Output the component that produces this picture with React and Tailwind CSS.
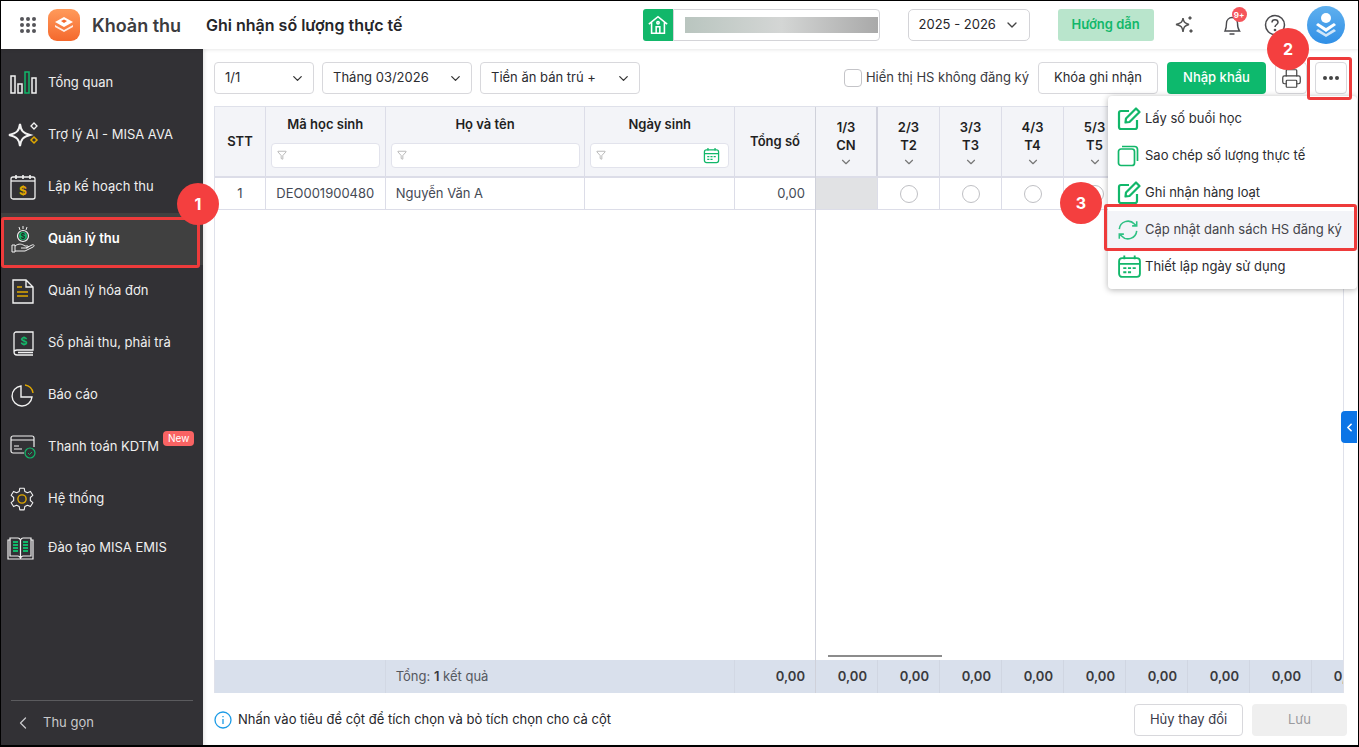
import React from 'react'
import { ChevronDown, ChevronLeft, Filter, Printer } from 'lucide-react'

const W = '#f2f2f2'
const Y = '#e0a800'
const G = '#12b76a'

const IconChart = () => (
  <svg width="28" height="24" viewBox="0 0 28 24" fill="none" strokeWidth="1.5">
    <rect x="1" y="5" width="4" height="17" stroke={W} />
    <rect x="8" y="13" width="4" height="9" stroke={W} />
    <rect x="15" y="1" width="4" height="21" stroke={G} />
    <rect x="22" y="7" width="4" height="15" stroke={W} />
  </svg>
)

const IconAi = () => (
  <svg width="32" height="26" viewBox="0 0 32 26" fill="none">
    <path d="M12 2 C13 9 15 11 22 13 C15 15 13 17 12 24 C11 17 9 15 1 13 C9 11 11 9 12 2 Z" stroke={W} strokeWidth="2" />
    <path d="M26 1 l3 3 -3 3 -3 -3 Z" stroke={W} strokeWidth="1.3" />
    <path d="M26 15 l3 3 -3 3 -3 -3 Z" stroke={Y} strokeWidth="1.5" />
  </svg>
)

const IconPlan = () => (
  <svg width="26" height="26" viewBox="0 0 26 26" fill="none">
    <rect x="1" y="3" width="24" height="22" rx="2" stroke={W} strokeWidth="1.3" />
    <path d="M1 7 H25" stroke={W} strokeWidth="1.3" />
    <path d="M6 1 V5 M13 1 V5 M20 1 V5" stroke={W} strokeWidth="1.6" />
    <text x="13" y="21" textAnchor="middle" fontSize="12" fontWeight="700" fill={Y} fontFamily="Inter">$</text>
  </svg>
)

const IconHand = () => (
  <svg width="24" height="27" viewBox="0 0 24 27" fill="none">
    <path d="M12 0 V3 M8 1 L9 4 M16 1 L15 4" stroke={W} strokeWidth="1" />
    <circle cx="12" cy="10" r="5.5" stroke={W} strokeWidth="1.2" />
    <circle cx="12" cy="10" r="4" fill={G} />
    <text x="12" y="13" textAnchor="middle" fontSize="7" fontWeight="700" fill="#222" fontFamily="Inter">$</text>
    <path d="M1 19 H4 V26 H1 Z M4 20 C8 17 11 18 14 20 H17 C18 21 17 22 15 22 H10 M15 22 L21 19 C23 18 24 20 22 21 L14 25 H4" stroke={W} strokeWidth="1" />
  </svg>
)

const IconInvoice = () => (
  <svg width="22" height="25" viewBox="0 0 22 25" fill="none">
    <path d="M1 1 H14 L21 8 V24 H1 Z M14 1 V8 H21" stroke={W} strokeWidth="1.4" />
    <path d="M5 8 H10 M5 13 H16 M5 17 H16" stroke={Y} strokeWidth="1.6" />
  </svg>
)

const IconBook = () => (
  <svg width="21" height="25" viewBox="0 0 21 25" fill="none">
    <path d="M3 1 H20 V19 H4 C2 19 1 20 1 21 V3 C1 2 2 1 3 1 Z" stroke={W} strokeWidth="1.3" />
    <path d="M1 21 C1 23 2 24 4 24 H20 M5 21.5 H20" stroke={W} strokeWidth="1.3" />
    <text x="11" y="14" textAnchor="middle" fontSize="11" fontWeight="700" fill={G} fontFamily="Inter">$</text>
  </svg>
)

const IconPie = () => (
  <svg width="23" height="23" viewBox="0 0 23 23" fill="none">
    <path d="M10 2 A10 10 0 1 0 21 13 H10 Z" stroke={W} strokeWidth="1.4" />
    <path d="M14 1 A9 9 0 0 1 22 9" stroke={Y} strokeWidth="1.4" />
  </svg>
)

const IconPay = () => (
  <svg width="26" height="24" viewBox="0 0 26 24" fill="none">
    <path d="M14 18 H3 C2 18 1 17 1 16 V3 C1 2 2 1 3 1 H22 C23 1 24 2 24 3 V12" stroke={W} strokeWidth="1.2" />
    <path d="M1 5 H24 M4 11 H9 M4 14 H12" stroke={W} strokeWidth="1.2" />
    <circle cx="20" cy="18" r="5" stroke={G} strokeWidth="1.2" />
    <path d="M18 18 L19.5 19.5 L22 17" stroke={G} strokeWidth="1" />
  </svg>
)

const IconGear = () => (
  <svg width="26" height="26" viewBox="0 0 24 24" fill="none">
    <path d="M10 2 H14 L14.6 5 L17 6.2 L19.8 5 L22 8.6 L19.7 10.6 V13.4 L22 15.4 L19.8 19 L17 17.8 L14.6 19 L14 22 H10 L9.4 19 L7 17.8 L4.2 19 L2 15.4 L4.3 13.4 V10.6 L2 8.6 L4.2 5 L7 6.2 L9.4 5 Z" stroke={W} strokeWidth="1" strokeLinejoin="round" />
    <circle cx="12" cy="12" r="3.8" stroke={Y} strokeWidth="1.3" />
  </svg>
)

const IconTrain = () => (
  <svg width="27" height="23" viewBox="0 0 27 23" fill="none">
    <path d="M1 3 H3 V19 H11 C12 19 13 20 13.5 21 C14 20 15 19 16 19 H24 V3 H26 V22 H1 Z" stroke={W} strokeWidth="1.2" />
    <path d="M3 3 V1 H11 C12 1 13 2 13.5 3 C14 2 15 1 16 1 H24 V3 M13.5 3 V21" stroke={W} strokeWidth="1.2" />
    <path d="M6 5 H11 M6 8 H11 M6 11 H11 M6 14 H11 M16 5 H21 M16 8 H21 M16 11 H21 M16 14 H21" stroke={G} strokeWidth="2" />
  </svg>
)

const navItems = [
  { label: 'Tổng quan', icon: IconChart, pl: 'pl-[9px]' },
  { label: 'Trợ lý AI - MISA AVA', icon: IconAi, pl: 'pl-[7px]' },
  { label: 'Lập kế hoạch thu', icon: IconPlan, pl: 'pl-[9px]' },
  { label: 'Quản lý thu', icon: IconHand, pl: 'pl-[10px]', active: true },
  { label: 'Quản lý hóa đơn', icon: IconInvoice, pl: 'pl-[11px]' },
  { label: 'Sổ phải thu, phải trả', icon: IconBook, pl: 'pl-[12px]' },
  { label: 'Báo cáo', icon: IconPie, pl: 'pl-[10px]' },
  { label: 'Thanh toán KDTM', icon: IconPay, pl: 'pl-[9px]', badge: true },
  { label: 'Hệ thống', icon: IconGear, pl: 'pl-[8px]' },
  { label: 'Đào tạo MISA EMIS', icon: IconTrain, pl: 'pl-[6px]', tight: true },
]

function Sidebar() {
  return (
    <aside className="flex w-[202px] shrink-0 flex-col bg-[#323135] pt-[8px]">
      {navItems.map((item) => {
        const Icon = item.icon
        return (
          <div
            key={item.label}
            className={`relative flex items-center text-[13px] ${item.tight ? 'h-[46px]' : 'h-[52px]'} ${item.pl} ${
              item.active ? 'bg-[#404040] font-semibold text-white' : 'text-[#efefef]'
            }`}
          >
            <span className="flex w-[38px] shrink-0">
              <Icon />
            </span>
            <span className="absolute left-[47px]">{item.label}</span>
            {item.badge && (
              <span className="absolute left-[162px] top-[10px] rounded-[4px] bg-[#f96363] px-[5px] text-[10px] leading-[15px] text-white">
                New
              </span>
            )}
          </div>
        )
      })}
      <div className="mt-auto px-[10px]">
        <div className="flex h-[45px] items-center gap-[10px] border-t border-[#5b5b5e] pb-[-1px] pl-[2px] text-[13px] text-[#c9c9cb]">
          <ChevronLeft size={20} strokeWidth={1.5} />
          <span>Thu gọn</span>
        </div>
      </div>
    </aside>
  )
}

function Header() {
  return (
    <header className="relative z-10 flex h-[48px] shrink-0 items-center bg-white shadow-[0_1px_4px_rgba(0,0,0,0.08)]">
      <div className="ml-[19px] grid grid-cols-3 gap-[2px]">
        {Array.from({ length: 9 }).map((_, i) => (
          <span key={i} className="h-[4px] w-[4px] rounded-full bg-[#55555a]" />
        ))}
      </div>
      <div className="ml-[12px] grid h-[32px] w-[32px] place-items-center rounded-[9px] bg-gradient-to-b from-[#ff9a5a] to-[#f4682c]">
        <svg width="20" height="18" viewBox="0 0 20 18">
          <path d="M10 1 L19 6 L10 11 L1 6 Z" fill="#fff" />
          <path d="M1 9 L10 14 L19 9 V11 L10 16 L1 11 Z" fill="#fff" opacity="0.85" />
          <path d="M7 5 L10 3.5 L13 5 L10 7 Z" fill="#f4682c" />
        </svg>
      </div>
      <span className="ml-[12px] w-[114px] text-[18px] font-semibold text-[#3c3c40]">Khoản thu</span>
      <span className="text-[16px] font-semibold text-[#26262a]">Ghi nhận số lượng thực tế</span>

      <div className="ml-[240px] flex h-[32px] w-[237px]">
        <div className="grid w-[30px] place-items-center rounded-l-[3px] bg-[#12b76a]">
          <svg width="22" height="22" viewBox="0 0 24 24" fill="none" stroke="#fff" strokeWidth="1.7">
            <path d="M2 11 L12 3 L22 11 M5 9 V21 H19 V9" />
            <path d="M10 21 V14 H14 V21" />
            <circle cx="12" cy="9.5" r="1.3" />
          </svg>
        </div>
        <div className="flex flex-1 items-center rounded-r-[4px] border border-[#d4d4d8] pl-[11px]">
          <div className="h-[16px] w-[193px] bg-gradient-to-r from-[#b9c5bf] via-[#d4d6d5] to-[#a9a9a9]" />
        </div>
      </div>

      <div className="ml-[28px] flex h-[32px] w-[122px] items-center justify-between rounded-[5px] border border-[#d4d4d8] pl-[10px] pr-[9px] text-[13px] text-[#26262a]">
        <span>2025 - 2026</span>
        <ChevronDown size={16} className="text-[#444]" />
      </div>

      <div className="ml-[28px] grid h-[32px] w-[96px] place-items-center rounded-[3px] bg-[#b9e5cc] text-[13px] font-semibold text-[#12b76a]">
        Hướng dẫn
      </div>

      <svg className="ml-[21px]" width="20" height="20" viewBox="0 0 20 20" fill="#555">
        <path d="M8 3 C8.6 7 9.6 8.4 14 9.5 C9.6 10.6 8.6 12 8 17 C7.4 12 6.4 10.6 1 9.5 C6.4 8.4 7.4 7 8 3 Z" fill="none" stroke="#555" strokeWidth="1.5" />
        <path d="M15 1 l2 2 -2 2 -2 -2 Z M16 14 l2 2 -2 2 -2 -2 Z" />
      </svg>

      <div className="relative ml-[25px] h-[24px] w-[24px]">
        <svg width="24" height="24" viewBox="0 0 24 24" fill="none" stroke="#4a4a4e" strokeWidth="1.4">
          <path d="M5 18 C6 16 6.5 14 6.5 10 C6.5 7 9 4.5 12 4.5 C15 4.5 17.5 7 17.5 10 C17.5 14 18 16 19.5 18 Z" />
          <path d="M10 21 H14" strokeLinecap="round" />
        </svg>
        <span className="absolute left-[12px] top-[-6px] grid h-[15px] w-[15px] place-items-center rounded-full bg-[#f5545a] text-[8px] font-bold text-white">
          9+
        </span>
      </div>

      <svg className="ml-[19px]" width="24" height="24" viewBox="0 0 24 24" fill="none" stroke="#4a4a4e" strokeWidth="1.5">
        <circle cx="12" cy="12" r="9.5" />
        <path d="M9 9.5 C9 7.5 10.5 6.8 12 6.8 C13.8 6.8 15 8 15 9.4 C15 11.5 12 11.5 12 14" />
        <circle cx="12" cy="17" r="0.6" />
      </svg>

      <div className="ml-[20px] grid h-[38px] w-[38px] place-items-center rounded-full bg-gradient-to-b from-[#5fb0ee] to-[#2f8fe6]">
        <svg width="24" height="26" viewBox="0 0 24 26" fill="#fff">
          <circle cx="12" cy="6" r="5" />
          <path d="M4 11 L12 16 L20 11 L22 13 L12 20 L2 13 Z" />
          <path d="M4 17 L12 22 L20 17 L22 19 L12 25 L2 19 Z" opacity="0.75" />
        </svg>
      </div>
    </header>
  )
}

function Select({ label, width }) {
  return (
    <div className={`flex h-[32px] items-center justify-between rounded-[4px] border border-[#d8d8dc] pl-[10px] pr-[8px] text-[13px] text-[#2c2c30] ${width}`}>
      <span>{label}</span>
      <ChevronDown size={15} className="text-[#333]" />
    </div>
  )
}

function Toolbar() {
  return (
    <div className="flex h-[32px] items-center">
      <Select label="1/1" width="w-[100px]" />
      <div className="w-[8px]" />
      <Select label="Tháng 03/2026" width="w-[150px]" />
      <div className="w-[8px]" />
      <Select label="Tiền ăn bán trú +" width="w-[160px]" />
      <div className="ml-auto flex items-center">
        <span className="h-[18px] w-[18px] rounded-[4px] border border-[#c4c4c8] bg-white" />
        <span className="ml-[4px] text-[13px] text-[#3a3a3e]">Hiển thị HS không đăng ký</span>
        <button className="ml-[9px] h-[32px] w-[120px] rounded-[4px] border border-[#d8d8dc] text-[13px] text-[#2c2c30]">Khóa ghi nhận</button>
        <button className="ml-[9px] h-[32px] w-[99px] rounded-[4px] bg-[#0db96d] text-[13px] font-medium text-white">Nhập khẩu</button>
        <button className="ml-[9px] grid h-[32px] w-[32px] place-items-center rounded-[4px] border border-[#d8d8dc] text-[#444]">
          <Printer size={21} strokeWidth={1.4} />
        </button>
        <button className="ml-[8px] flex h-[32px] w-[32px] items-center justify-center gap-[2px] rounded-[4px] border border-[#d8d8dc]">
          <span className="h-[4px] w-[4px] rounded-full bg-[#444]" />
          <span className="h-[4px] w-[4px] rounded-full bg-[#444]" />
          <span className="h-[4px] w-[4px] rounded-full bg-[#444]" />
        </button>
      </div>
    </div>
  )
}

function FilterBox({ width, calendar }) {
  return (
    <div className={`mt-[8px] flex h-[25px] items-center justify-between rounded-[4px] border border-[#e2e3ec] bg-white pl-[5px] pr-[8px] ${width}`}>
      <Filter size={10} strokeWidth={1.2} className="text-[#777]" />
      {calendar && <CalendarIcon size={17} />}
    </div>
  )
}

function CalendarIcon({ size }) {
  return (
    <svg width={size} height={size} viewBox="0 0 24 24" fill="none" stroke="#12b76a" strokeWidth="1.8">
      <rect x="2" y="4" width="20" height="18" rx="3" />
      <path d="M2 9.5 H22 M7 1.5 V5 M17 1.5 V5" />
      <path d="M6 13.5 H9 M10.5 13.5 H13.5 M15 13.5 H18 M6 17.5 H9 M10.5 17.5 H13.5" />
    </svg>
  )
}

const fixedCols = [
  { key: 'stt', width: 'w-[51px]', title: 'STT' },
  { key: 'code', width: 'w-[120px]', title: 'Mã học sinh', filter: 'w-[109px]' },
  { key: 'name', width: 'w-[200px]', title: 'Họ và tên', filter: 'w-[189px]' },
  { key: 'dob', width: 'w-[150px]', title: 'Ngày sinh', filter: 'w-[139px]', calendar: true },
  { key: 'total', width: 'w-[80px]', title: 'Tổng số' },
]

const dayCols = [
  ['1/3', 'CN'],
  ['2/3', 'T2'],
  ['3/3', 'T3'],
  ['4/3', 'T4'],
  ['5/3', 'T5'],
  ['6/3', 'T6'],
  ['7/3', 'T7'],
  ['8/3', 'CN'],
  ['9/3', 'T2'],
]

function Table() {
  return (
    <div className="mt-[12px] flex h-[587px] w-[1130px] overflow-hidden border-x border-t border-[#dfe1ea]">
      {/* cột cố định */}
      <div className="flex w-[601px] shrink-0 flex-col border-r border-[#cfd1da]">
        <div className="flex h-[71px] border-b-2 border-[#dcdde8] bg-[#f3f4f8] text-[13px] font-semibold text-[#1f1f23]">
          {fixedCols.map((col) => (
            <div
              key={col.key}
              className={`flex flex-col items-center justify-center border-r border-[#dcdde8] last:border-r-0 ${col.width}`}
            >
              <span>{col.title}</span>
              {col.filter && <FilterBox width={col.filter} calendar={col.calendar} />}
            </div>
          ))}
        </div>
        <div className="flex h-[32px] border-b border-[#dcdde8] text-[13px] text-[#444a55]">
          <div className="grid w-[51px] place-items-center border-r border-[#dcdde8]">1</div>
          <div className="grid w-[120px] place-items-center border-r border-[#dcdde8]">DEO001900480</div>
          <div className="flex w-[200px] items-center border-r border-[#dcdde8] pl-[10px]">Nguyễn Văn A</div>
          <div className="w-[150px] border-r border-[#dcdde8]" />
          <div className="flex w-[80px] items-center justify-end pr-[10px]">0,00</div>
        </div>
        <div className="flex-1" />
        <div className="flex h-[33px] bg-[#d9e0ec] text-[13px] text-[#55585f]">
          <div className="w-[171px] border-r border-[#d2d8e4]" />
          <div className="flex w-[350px] items-center border-r border-[#d2d8e4] pl-[10px]">
            <span>Tổng: <b className="font-semibold text-[#3a3a3e]">1</b> kết quả</span>
          </div>
          <div className="flex w-[80px] items-center justify-end pr-[10px] font-semibold text-[#3a3a3e]">0,00</div>
        </div>
      </div>

      {/* cột ngày cuộn ngang */}
      <div className="flex min-w-0 flex-1 flex-col">
        <div className="flex h-[71px] border-b-2 border-[#dcdde8] bg-[#f3f4f8] text-[13px] font-semibold leading-[18px] text-[#1f1f23]">
          {dayCols.map(([date, day], i) => (
            <div
              key={date}
              className={`flex w-[62px] shrink-0 flex-col items-center pt-[11px] ${i === 0 ? 'border-r-2 border-[#d2d3de]' : 'border-r border-[#dcdde8]'}`}
            >
              <span>{date}</span>
              <span>{day}</span>
              <ChevronDown size={14} className="mt-[1px] text-[#777]" />
            </div>
          ))}
        </div>
        <div className="flex h-[32px] border-b border-[#dcdde8]">
          {dayCols.map(([date], i) => (
            <div
              key={date}
              className={`grid w-[62px] shrink-0 place-items-center ${i === 0 ? 'border-r border-[#dcdde8] bg-[#e1e2e4]' : 'border-r border-[#dcdde8]'}`}
            >
              {i > 0 && <span className="h-[18px] w-[18px] rounded-full border border-[#bfc0c4]" />}
            </div>
          ))}
        </div>
        <div className="flex flex-1 items-end pb-[3px] pl-[12px]">
          <div className="h-[2px] w-[114px] bg-[#8c8c8c]" />
        </div>
        <div className="flex h-[33px] bg-[#d9e0ec] text-[13px] font-semibold text-[#3a3a3e]">
          {dayCols.map(([date]) => (
            <div key={date} className="flex w-[62px] shrink-0 items-center justify-end border-r border-[#d0d6e2] pr-[10px]">
              0,00
            </div>
          ))}
        </div>
      </div>
    </div>
  )
}

function Footer() {
  return (
    <div className="mt-[11px] flex h-[32px] items-center">
      <svg width="18" height="18" viewBox="0 0 18 18" fill="none" stroke="#1c9be6" strokeWidth="1.3">
        <circle cx="9" cy="9" r="8" />
        <path d="M9 8 V13 M9 5 V6.2" />
      </svg>
      <span className="ml-[6px] text-[13px] text-[#26262a]">Nhấn vào tiêu đề cột để tích chọn và bỏ tích chọn cho cả cột</span>
      <button className="ml-auto h-[32px] w-[109px] rounded-[4px] border border-[#d8d8dc] text-[13px] text-[#3a3a4a]">Hủy thay đổi</button>
      <button className="ml-[9px] h-[32px] w-[95px] rounded-[4px] bg-[#efefef] text-[13px] text-[#9a9a9e]">Lưu</button>
    </div>
  )
}

const EditIcon = () => (
  <svg width="24" height="24" viewBox="0 0 24 24" fill="none" stroke="#12b76a" strokeWidth="2.2" strokeLinejoin="round">
    <path d="M12 4 H4 C2.8 4 2 4.8 2 6 V20 C2 21.2 2.8 22 4 22 H18 C19.2 22 20 21.2 20 20 V13" />
    <path d="M19 1.5 L22.5 5 L12.5 15 L8.5 15.5 L9 11.5 Z" />
  </svg>
)

const CopyIcon = () => (
  <svg width="22" height="22" viewBox="0 0 22 22" fill="none" stroke="#12b76a" strokeWidth="1.7">
    <rect x="1.5" y="4" width="16" height="16.5" rx="2.5" />
    <path d="M5 1.5 H17.5 C19.5 1.5 20.5 2.5 20.5 4.5 V16" />
  </svg>
)

const SyncIcon = () => (
  <svg width="22" height="22" viewBox="0 0 24 24" fill="none" stroke="#2fc184" strokeWidth="1.7">
    <path d="M2.5 11 A9.5 9.5 0 0 1 19 5.5 L21 7.5 M21.5 2.5 V7.5 H16.5" />
    <path d="M21.5 13 A9.5 9.5 0 0 1 5 18.5 L3 16.5 M2.5 21.5 V16.5 H7.5" />
  </svg>
)

const menuItems = [
  { label: 'Lấy số buổi học', icon: <EditIcon /> },
  { label: 'Sao chép số lượng thực tế', icon: <CopyIcon /> },
  { label: 'Ghi nhận hàng loạt', icon: <EditIcon /> },
  { label: 'Cập nhật danh sách HS đăng ký', icon: <SyncIcon />, hover: true },
  { label: 'Thiết lập ngày sử dụng', icon: <CalendarIcon size={25} /> },
]

function Menu() {
  return (
    <div className="absolute left-[1107px] top-[95px] z-20 flex w-[249px] flex-col rounded-[4px] bg-white py-[4px] shadow-[0_1px_6px_rgba(0,0,0,0.3)]">
      {menuItems.map((item) => (
        <div
          key={item.label}
          className={`flex h-[37px] items-center pl-[9px] text-[13px] ${item.hover ? 'bg-[#f3f4f8] text-[#44444a]' : 'text-[#2c2c30]'}`}
        >
          <span className="flex w-[28px] shrink-0">{item.icon}</span>
          <span>{item.label}</span>
        </div>
      ))}
    </div>
  )
}

function Step({ n, className }) {
  return (
    <span
      className={`absolute z-30 grid h-[42px] w-[42px] place-items-center rounded-full bg-[#f43f3f] text-[16px] font-bold text-white ${className}`}
    >
      {n}
    </span>
  )
}

export default function App() {
  return (
    <div
      className="relative flex h-[747px] w-[1359px] flex-col overflow-hidden border border-b-2 border-black bg-white"
      style={{ fontFamily: 'Inter, "Noto Sans", sans-serif' }}
    >
      <Header />
      <div className="flex min-h-0 flex-1">
        <Sidebar />
        <main className="min-w-0 flex-1 bg-white px-[11px] pt-[13px] shadow-[inset_3px_0_4px_-2px_rgba(0,0,0,0.12)]">
          <Toolbar />
          <Table />
          <Footer />
        </main>
      </div>

      <Menu />

      {/* khung đỏ chú thích */}
      <div className="absolute left-[0px] top-[216px] z-20 h-[51px] w-[199px] rounded-[3px] border-[3px] border-[#ee3b3b]" />
      <div className="absolute left-[1306px] top-[56px] z-20 h-[43px] w-[45px] rounded-[3px] border-[3px] border-[#ee3b3b]" />
      <div className="absolute left-[1103px] top-[203px] z-30 h-[47px] w-[253px] rounded-[3px] border-[3px] border-[#ee3b3b]" />
      <Step n="1" className="left-[176px] top-[182px]" />
      <Step n="2" className="left-[1266px] top-[27px]" />
      <Step n="3" className="left-[1059px] top-[181px]" />

      {/* tab mở panel bên phải */}
      <div className="absolute left-[1340px] top-[410px] z-10 grid h-[32px] w-[16px] place-items-center rounded-l-[4px] bg-[#0c75e6]">
        <ChevronLeft size={13} strokeWidth={3} className="text-white" />
      </div>
    </div>
  )
}
